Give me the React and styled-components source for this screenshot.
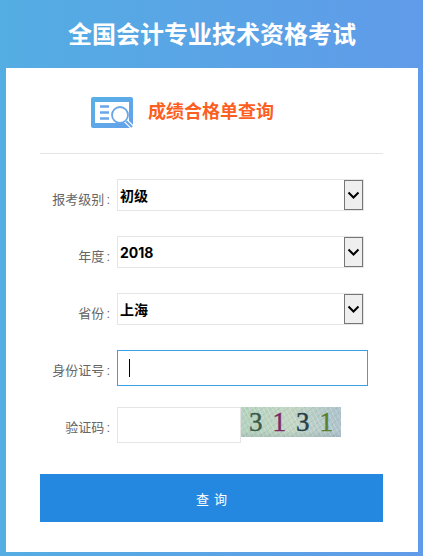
import React from "react";
import styled, { createGlobalStyle } from "styled-components";

const GlobalStyle = createGlobalStyle`
  html, body {
    margin: 0;
    padding: 0;
  }
  body {
    font-family: "Liberation Sans", "Noto Sans CJK SC", sans-serif;
  }
  * {
    box-sizing: border-box;
  }
`;

const Page = styled.div`
  width: 423px;
  height: 556px;
  padding: 0 5px 4px 6px;
  background: linear-gradient(90deg, #54ade3, #609be9);
  display: flex;
  flex-direction: column;
`;

const Banner = styled.h1`
  height: 68px;
  margin: 0;
  padding-top: 2px;
  font-size: 24px;
  font-weight: 700;
  line-height: 66px;
  text-align: center;
  color: #fff;
`;

const Card = styled.div`
  flex: 1;
  background: #fff;
  padding: 0 35px 0 34px;
`;

const TitleBar = styled.div`
  height: 86px;
  padding: 4px 0 0 51px;
  display: flex;
  align-items: center;
  gap: 14px;
  border-bottom: 1px solid #e5e5e5;
`;

const TitleText = styled.h2`
  margin: 0;
  padding-bottom: 5px;
  font-size: 18px;
  font-weight: 700;
  color: #fc5f1f;
`;

const Form = styled.form`
  padding-top: 25px;
  display: flex;
  flex-direction: column;
  align-items: stretch;
`;

const Row = styled.div`
  display: flex;
  align-items: flex-start;
  margin-bottom: ${(props) => props.$gap}px;
`;

const Label = styled.label`
  width: 70px;
  margin-right: 7px;
  padding-top: ${(props) => props.$top}px;
  font-size: 13px;
  line-height: 18px;
  text-align: right;
  white-space: nowrap;
  color: #666;
`;

const Colon = styled.span`
  margin-left: 2px;
`;

const SelectBox = styled.div`
  position: relative;
  width: 247px;
  height: 32px;
`;

const Select = styled.select`
  appearance: none;
  width: 100%;
  height: 100%;
  padding: 0 0 0 2px;
  border: 1px solid #e5e5e5;
  border-radius: 0;
  background: #fff;
  outline: none;
  font-family: Inter, "Noto Sans CJK SC", sans-serif;
  font-size: 14px;
  font-weight: 700;
  color: #000;
`;

const Arrow = styled.span`
  position: absolute;
  top: 1px;
  right: 1px;
  width: 19px;
  height: 30px;
  display: flex;
  align-items: center;
  justify-content: center;
  border: 1px solid #767676;
  background: #efefef;
  pointer-events: none;
`;

const InputBox = styled.div`
  position: relative;
  width: 251px;
  height: 36px;
`;

const TextInput = styled.input`
  width: ${(props) => props.$width}px;
  height: 36px;
  padding: 0 10px;
  border: 1px solid ${(props) => (props.$active ? "#3b9fe6" : "#e5e5e5")};
  border-radius: 0;
  outline: none;
  background: #fff;
  font-size: 14px;
`;

const Caret = styled.span`
  position: absolute;
  top: 9px;
  left: 12px;
  width: 1px;
  height: 18px;
  background: #000;
`;

const CaptchaImage = styled.div`
  width: 100px;
  height: 30px;
  padding-left: 8px;
  display: flex;
  align-items: center;
  gap: 10px;
  background:
    repeating-linear-gradient(63deg, rgba(255, 255, 255, 0.18) 0 1px, transparent 1px 4px),
    repeating-linear-gradient(-38deg, rgba(90, 130, 110, 0.12) 0 1px, transparent 1px 5px),
    linear-gradient(180deg, transparent 80%, rgba(120, 140, 150, 0.25)),
    linear-gradient(90deg, #b5d2c0, #c3d6c4 50%, #aec3cc);
  font-family: "Liberation Serif", serif;
  font-size: 27px;
  line-height: 30px;
`;

const Digit = styled.span`
  color: ${(props) => props.$color};
  font-weight: 400;
  -webkit-text-stroke: 0.4px ${(props) => props.$color};
`;

const SubmitButton = styled.button`
  display: block;
  width: 343px;
  height: 48px;
  margin-top: 6px;
  padding: 0 0 0 5px;
  border: none;
  background: #2588e0;
  color: #fff;
  font-family: inherit;
  font-size: 13px;
  letter-spacing: 5px;
`;

const ChevronIcon = () => (
  <svg width="13" height="9" viewBox="0 0 13 9" fill="none">
    <path d="M1.5 1.5 L6.5 6.5 L11.5 1.5" stroke="#000" strokeWidth="2" />
  </svg>
);

const QueryIcon = () => (
  <svg width="43" height="32" viewBox="0 0 43 32" fill="none">
    <defs>
      <linearGradient id="iconFill" x1="0" y1="0" x2="1" y2="1">
        <stop offset="0" stopColor="#57b1e6" />
        <stop offset="1" stopColor="#64a0ea" />
      </linearGradient>
    </defs>
    <rect x="0" y="0" width="42" height="31" rx="2" fill="url(#iconFill)" />
    <rect x="4" y="5" width="34" height="21" fill="#fff" />
    <path d="M9 9.5h9M9 15.5h9M9 21.5h9" stroke="#68a6e8" strokeWidth="2.4" />
    <circle cx="29" cy="18" r="8" fill="#fff" stroke="#68a6e8" strokeWidth="1.8" />
    <path d="M35 24 L42 31" stroke="#fff" strokeWidth="4.5" />
    <path d="M35 24 L41 30" stroke="#68a6e8" strokeWidth="2.2" />
  </svg>
);

const selects = [
  { label: "报考级别", value: "初级" },
  { label: "年度", value: "2018" },
  { label: "省份", value: "上海" },
];

const App = () => {
  return (
    <Page>
      <GlobalStyle />
      <Banner>全国会计专业技术资格考试</Banner>
      <Card>
        <TitleBar>
          <QueryIcon />
          <TitleText>成绩合格单查询</TitleText>
        </TitleBar>
        <Form onSubmit={(e) => e.preventDefault()}>
          {selects.map((item) => (
            <Row $gap={25} key={item.label}>
              <Label $top={12}>
                {item.label}
                <Colon>:</Colon>
              </Label>
              <SelectBox>
                <Select defaultValue={item.value}>
                  <option>{item.value}</option>
                </Select>
                <Arrow>
                  <ChevronIcon />
                </Arrow>
              </SelectBox>
            </Row>
          ))}
          <Row $gap={21}>
            <Label $top={12}>
              身份证号
              <Colon>:</Colon>
            </Label>
            <InputBox>
              <TextInput $width={251} $active />
              <Caret />
            </InputBox>
          </Row>
          <Row $gap={25}>
            <Label $top={12}>
              验证码
              <Colon>:</Colon>
            </Label>
            <TextInput $width={124} />
            <CaptchaImage>
              <Digit $color="#3d5a47">3</Digit>
              <Digit $color="#7d2a68">1</Digit>
              <Digit $color="#26404a">3</Digit>
              <Digit $color="#5c7f2e">1</Digit>
            </CaptchaImage>
          </Row>
          <SubmitButton type="button">查询</SubmitButton>
        </Form>
      </Card>
    </Page>
  );
};

export default App;
